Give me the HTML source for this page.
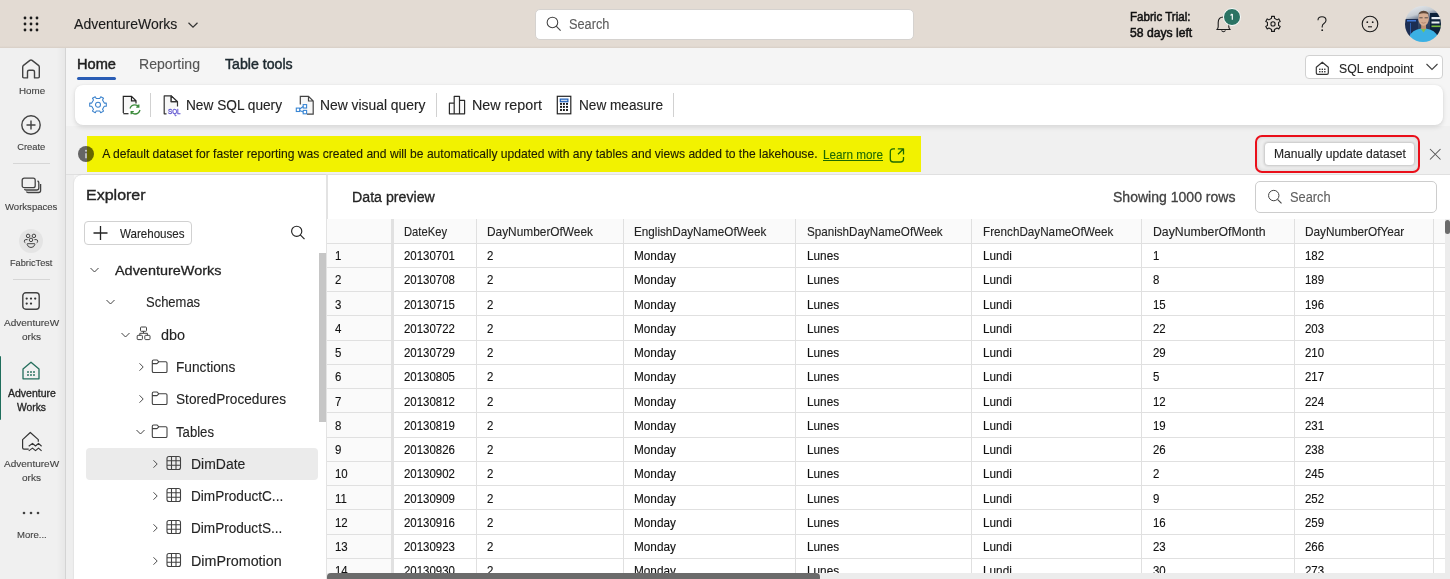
<!DOCTYPE html>
<html><head><meta charset="utf-8">
<style>
*{box-sizing:border-box;margin:0;padding:0}
html,body{width:1450px;height:579px;overflow:hidden;background:#f5f5f5;font-family:"Liberation Sans",sans-serif;color:#242424}
.a{position:absolute}
.t{position:absolute;line-height:1;white-space:nowrap;-webkit-text-stroke:0.12px currentColor}
svg{position:absolute;overflow:visible;fill:none}
.rl{position:absolute;left:0;width:62px;text-align:center;font-size:10px;line-height:1;color:#424242;white-space:nowrap}
.tc{position:absolute;line-height:1;white-space:nowrap;font-size:11.7px;color:#242424}
</style></head><body>
<div class="a" style="left:0px;top:0px;width:1450px;height:48px;background:#e3dbd3"></div>
<svg style="left:0;top:0" width="60" height="48"><circle cx="25" cy="18" r="1.4" fill="#1b1b1b"/><circle cx="25" cy="24" r="1.4" fill="#1b1b1b"/><circle cx="25" cy="30" r="1.4" fill="#1b1b1b"/><circle cx="31" cy="18" r="1.4" fill="#1b1b1b"/><circle cx="31" cy="24" r="1.4" fill="#1b1b1b"/><circle cx="31" cy="30" r="1.4" fill="#1b1b1b"/><circle cx="37" cy="18" r="1.4" fill="#1b1b1b"/><circle cx="37" cy="24" r="1.4" fill="#1b1b1b"/><circle cx="37" cy="30" r="1.4" fill="#1b1b1b"/></svg>
<div class="t" style="left:74.10px;top:17px;font-size:14px;color:#1b1b1b;">AdventureWorks</div>
<svg style="left:186px;top:20px" width="14" height="10"><path d="M2.5 2.8 L7 7.2 L11.5 2.8" stroke="#333" stroke-width="1.2"/></svg>
<div class="a" style="left:534.5px;top:8.5px;width:379.0px;height:31.0px;background:#fff;border-radius:5px;border:1px solid #d5d2cf"></div>
<svg style="left:546px;top:17px" width="16" height="16"><circle cx="6.45" cy="5.45" r="5.3" stroke="#424242" stroke-width="1.05"/><path d="M10.2 9.2 L14.6 13.6" stroke="#424242" stroke-width="1.1"/></svg>
<div class="t" style="left:568.90px;top:18px;font-size:13.8px;color:#5c5c5c;transform:scaleX(0.9241);transform-origin:0 0;">Search</div>
<div class="t" style="left:1129.70px;top:11px;font-size:12.3px;color:#111;-webkit-text-stroke:0.5px currentColor;transform:scaleX(0.9419);transform-origin:0 0;">Fabric Trial:</div>
<div class="t" style="left:1129.70px;top:27px;font-size:12.3px;color:#111;-webkit-text-stroke:0.5px currentColor;transform:scaleX(0.9890);transform-origin:0 0;">58 days left</div>
<svg style="left:1214px;top:14px" width="20" height="20"><path d="M3 15.5 L3.8 14.2 Q4.2 13.5 4.2 12.2 L4.2 8.5 Q4.2 3 9.5 3 Q14.8 3 14.8 8.5 L14.8 12.2 Q14.8 13.5 15.2 14.2 L16 15.5 Z" stroke="#1b1b1b" stroke-width="1.1"/><path d="M7.5 16.5 Q9.5 19 11.5 16.5" stroke="#1b1b1b" stroke-width="1.1"/></svg>
<div class="a" style="left:1223px;top:7.8px;width:18px;height:18px;border-radius:50%;background:#2b7363;border:1.5px solid #fff"></div>
<svg style="left:1226px;top:11px" width="12" height="12"><path d="M6.3 2.9 L6.3 8.7 M6.3 2.9 Q5.6 3.9 4.4 4.3" stroke="#fff" stroke-width="1.15"/></svg>
<svg style="left:1263px;top:14px" width="20" height="20"><path d="M15.54 11.43 L17.22 12.39 L15.77 14.91 L14.09 13.94 L11.45 15.46 L11.45 17.40 L8.55 17.40 L8.55 15.46 L5.91 13.94 L4.23 14.91 L2.78 12.39 L4.46 11.43 L4.46 8.37 L2.78 7.41 L4.23 4.89 L5.91 5.86 L8.55 4.34 L8.55 2.40 L11.45 2.40 L11.45 4.34 L14.09 5.86 L15.77 4.89 L17.22 7.41 L15.54 8.37Z" stroke="#1b1b1b" stroke-width="1.1" stroke-linejoin="round"/><circle cx="10" cy="9.9" r="2.1" stroke="#1b1b1b" stroke-width="1.1"/></svg>
<svg style="left:1314px;top:14px" width="16" height="20"><path d="M4 6.2 Q4 2.8 8 2.8 Q12 2.8 12 6.3 Q12 8.3 10 9.5 Q8.2 10.6 8.2 12.5 L8.2 13.5" stroke="#1b1b1b" stroke-width="1.1"/><circle cx="8.2" cy="16.2" r="0.9" fill="#1b1b1b"/></svg>
<svg style="left:1360px;top:14px" width="20" height="20"><circle cx="10" cy="10" r="7.8" stroke="#1b1b1b" stroke-width="1.1"/><circle cx="7.3" cy="8.2" r="0.9" fill="#1b1b1b"/><circle cx="12.7" cy="8.2" r="0.9" fill="#1b1b1b"/><path d="M8 12.8 L12 12.8" stroke="#1b1b1b" stroke-width="1.1"/></svg>
<svg style="left:1405px;top:6px" width="36" height="36"><defs><clipPath id="av"><circle cx="18" cy="18" r="18"/></clipPath>
<linearGradient id="avbg" x1="0" y1="0" x2="0.3" y2="1"><stop offset="0" stop-color="#eef0f2"/><stop offset="0.3" stop-color="#c5ccd3"/><stop offset="0.5" stop-color="#3a4c6a"/><stop offset="1" stop-color="#1e2c48"/></linearGradient>
<filter id="avb"><feGaussianBlur stdDeviation="0.35"/></filter></defs><g clip-path="url(#av)" filter="url(#avb)">
<rect width="36" height="36" fill="url(#avbg)"/>
<rect x="0" y="13" width="13" height="20" fill="#1d2e52"/><rect x="2" y="14" width="9" height="1.5" fill="#3f78d8"/><rect x="5" y="17" width="1" height="12" fill="#2f5fb0"/>
<rect x="25" y="7" width="11" height="22" fill="#10233a"/>
<rect x="26.5" y="11" width="9" height="2.2" fill="#e8eef4"/><rect x="26.5" y="15.5" width="8" height="2" fill="#e8eef4"/><rect x="26.5" y="19.5" width="9" height="1.6" fill="#79bd3a"/>
<path d="M3 36 Q4 26 12 23.5 L18.5 22 L25 23.5 Q33 26 34 36 Z" fill="#3bb0e4"/>
<path d="M15.5 22.5 L18.5 26.5 L21.5 22.5 Z" fill="#7cc05a"/>
<rect x="16.2" y="17" width="4.8" height="6" fill="#c09070"/>
<ellipse cx="18.6" cy="12.8" rx="5.3" ry="7" fill="#d6ad92"/>
<path d="M13.1 11 Q12.8 5 18.6 4.8 Q24.4 5 24.1 11 L23.6 8.3 Q18.6 6 13.6 8.3 Z" fill="#5e4a3a"/>
<path d="M14.3 11.8 L17.6 11.8 M19.6 11.8 L22.9 11.8" stroke="#333" stroke-width="0.8"/>
<path d="M16.5 16.5 Q18.6 17.8 20.7 16.5" stroke="#a0705a" stroke-width="0.6"/>
</g></svg>
<div class="a" style="left:0px;top:48px;width:66px;height:531px;background:#f0f0f0"></div>
<div class="a" style="left:56px;top:48px;width:10px;height:531px;background:linear-gradient(90deg,rgba(0,0,0,0),rgba(0,0,0,0.04))"></div>
<div class="a" style="left:65px;top:48px;width:1px;height:531px;background:rgba(0,0,0,.08)"></div>
<svg style="left:21px;top:59px" width="20" height="20"><path d="M1.7 17.8 L1.7 7.9 Q1.7 7 2.5 6.4 L8.9 1.4 Q10 0.6 11.1 1.4 L17.5 6.4 Q18.3 7 18.3 7.9 L18.3 17.8 Q18.3 18.9 17.2 18.9 L13.5 18.9 L13.5 12.8 Q13.5 11.2 11.9 11.2 L8.1 11.2 Q6.5 11.2 6.5 12.8 L6.5 18.9 L2.8 18.9 Q1.7 18.9 1.7 17.8 Z" stroke="#424242" stroke-width="1.4" stroke-linejoin="round"/></svg>
<div class="t" style="left:18.50px;top:86px;font-size:9.4px;color:#424242;transform:scaleX(1.0473);transform-origin:0 0;">Home</div>
<svg style="left:21px;top:115px" width="20" height="20"><circle cx="10" cy="10" r="9.2" stroke="#424242" stroke-width="1.4"/><path d="M10 5.5 L10 14.5 M5.5 10 L14.5 10" stroke="#424242" stroke-width="1.4"/></svg>
<div class="t" style="left:17.20px;top:142px;font-size:9.4px;color:#424242;">Create</div>
<div class="a" style="left:13px;top:163px;width:37px;height:1px;background:#d6d6d6"></div>
<svg style="left:21px;top:177px" width="21" height="18"><rect x="1.2" y="1.2" width="13" height="9.5" rx="2" stroke="#424242" stroke-width="1.3"/><path d="M16.5 4 Q17.8 4.3 17.8 5.8 L17.8 11 Q17.8 13 15.8 13 L5 13 Q3.8 13 3.5 12" stroke="#424242" stroke-width="1.3"/><path d="M19.6 7 L19.6 13.5 Q19.6 15.5 17.6 15.5 L7 15.5 Q5.8 15.5 5.5 14.5" stroke="#424242" stroke-width="1.3"/></svg>
<div class="t" style="left:5.10px;top:202px;font-size:9.4px;color:#424242;transform:scaleX(1.0190);transform-origin:0 0;">Workspaces</div>
<div class="a" style="left:19px;top:229px;width:24px;height:24px;border-radius:50%;background:#e4e4e4"></div>
<svg style="left:19px;top:229px" width="24" height="24"><g stroke="#3a3a3a" stroke-width="0.95"><circle cx="9.1" cy="6.9" r="1.75"/><circle cx="14.9" cy="6.9" r="1.75"/><circle cx="12" cy="10.9" r="1.75"/><path d="M8.6 10.6 L6.8 10.6 Q5.4 10.6 5.4 12 L5.4 12.6 Q5.4 13.5 6.3 13.8 M15.4 10.6 L17.2 10.6 Q18.6 10.6 18.6 12 L18.6 12.6 Q18.6 13.5 17.7 13.8 M8.3 14.7 L15.7 14.7 Q16 14.7 15.8 15.6 Q15 18.5 12 18.5 Q9 18.5 8.2 15.6 Q8 14.7 8.3 14.7 Z"/></g></svg>
<div class="t" style="left:10.20px;top:258px;font-size:9.4px;color:#424242;transform:scaleX(0.9803);transform-origin:0 0;">FabricTest</div>
<div class="a" style="left:13px;top:279px;width:37px;height:1px;background:#d6d6d6"></div>
<svg style="left:22px;top:292px" width="18" height="18"><rect x="0.8" y="0.8" width="16.4" height="16.4" rx="3" stroke="#424242" stroke-width="1.4"/><circle cx="4.7" cy="6.6" r="1.15" fill="#333"/><circle cx="9" cy="6.6" r="1.15" fill="#333"/><circle cx="13.2" cy="6.6" r="1.15" fill="#333"/><circle cx="4.7" cy="11.6" r="1.15" fill="#333"/><circle cx="9" cy="11.6" r="1.15" fill="#333"/></svg>
<div class="t" style="left:3.60px;top:318px;font-size:9.4px;color:#424242;transform:scaleX(1.0680);transform-origin:0 0;">AdventureW</div>
<div class="t" style="left:21.80px;top:332px;font-size:9.4px;color:#424242;transform:scaleX(1.0723);transform-origin:0 0;">orks</div>
<div class="a" style="left:0px;top:355.5px;width:1.3px;height:64.5px;background:#1f6e5c;border-radius:0 1px 1px 0"></div>
<svg style="left:22px;top:361px" width="18" height="19"><path d="M1 8 L9 1.2 L17 8 L17 17.8 L1 17.8 Z" stroke="#246e5c" stroke-width="1.3" stroke-linejoin="round"/><circle cx="6" cy="11" r="0.95" fill="#246e5c"/><circle cx="6" cy="14" r="0.95" fill="#246e5c"/><circle cx="9" cy="11" r="0.95" fill="#246e5c"/><circle cx="9" cy="14" r="0.95" fill="#246e5c"/><circle cx="12" cy="11" r="0.95" fill="#246e5c"/><circle cx="12" cy="14" r="0.95" fill="#246e5c"/></svg>
<div class="t" style="left:7.50px;top:389px;font-size:10px;color:#242424;-webkit-text-stroke:0.3px currentColor;transform:scaleX(1.0484);transform-origin:0 0;">Adventure</div>
<div class="t" style="left:16.90px;top:403px;font-size:10px;color:#242424;-webkit-text-stroke:0.3px currentColor;transform:scaleX(1.0300);transform-origin:0 0;">Works</div>
<svg style="left:21px;top:431px" width="22" height="22"><path d="M7.7 18.2 L3 18.2 Q1.6 18.2 1.6 16.8 L1.6 8.6 L9.3 1.5 L17.3 8.6 L17.3 10.7" stroke="#333" stroke-width="1.2" stroke-linejoin="round"/><path d="M7.7 15.3 L11.5 12.4 L14.5 15 L17.5 12.4 L20.6 15.2 M7.7 19.9 L11.5 17.1 L14.5 19.6 L17.5 17.1 L20.6 19.9" stroke="#333" stroke-width="1.15" stroke-linejoin="round"/></svg>
<div class="t" style="left:3.60px;top:459px;font-size:9.4px;color:#424242;transform:scaleX(1.0680);transform-origin:0 0;">AdventureW</div>
<div class="t" style="left:21.80px;top:473px;font-size:9.4px;color:#424242;transform:scaleX(1.0723);transform-origin:0 0;">orks</div>
<svg style="left:20px;top:508px" width="22" height="10"><circle cx="4" cy="5" r="1.3" fill="#424242"/><circle cx="11" cy="5" r="1.3" fill="#424242"/><circle cx="18" cy="5" r="1.3" fill="#424242"/></svg>
<div class="t" style="left:16.70px;top:530px;font-size:9.4px;color:#424242;transform:scaleX(1.0176);transform-origin:0 0;">More...</div>
<div class="a" style="left:0px;top:46px;width:1450px;height:2px;background:linear-gradient(180deg,rgba(0,0,0,0),rgba(60,40,20,.07))"></div>
<div class="t" style="left:77.00px;top:58px;font-size:13.8px;color:#1f1f1f;-webkit-text-stroke:0.45px currentColor;transform:scaleX(1.0594);transform-origin:0 0;">Home</div>
<div class="a" style="left:77px;top:77px;width:39px;height:2.5px;background:#2a5db5;border-radius:2px"></div>
<div class="t" style="left:139.40px;top:58px;font-size:13.8px;color:#555;transform:scaleX(1.0196);transform-origin:0 0;">Reporting</div>
<div class="t" style="left:224.60px;top:58px;font-size:13.8px;color:#1e2a30;-webkit-text-stroke:0.45px currentColor;transform:scaleX(1.0262);transform-origin:0 0;">Table tools</div>
<div class="a" style="left:1305px;top:55px;width:138px;height:24px;background:#fff;border:1px solid #d1d1d1;border-radius:4px"></div>
<svg style="left:1315px;top:61px" width="15" height="15"><path d="M1.3 6.3 L7.3 1.2 L13.3 6.3 L13.3 11.9 Q13.3 13.3 11.9 13.3 L2.7 13.3 Q1.3 13.3 1.3 11.9 Z" stroke="#333" stroke-width="1.15" stroke-linejoin="round"/><rect x="4.10" y="7.60" width="1.4" height="1.4" fill="#333"/><rect x="4.10" y="10.00" width="1.4" height="1.4" fill="#333"/><rect x="6.60" y="7.60" width="1.4" height="1.4" fill="#333"/><rect x="6.60" y="10.00" width="1.4" height="1.4" fill="#333"/><rect x="9.10" y="7.60" width="1.4" height="1.4" fill="#333"/><rect x="9.10" y="10.00" width="1.4" height="1.4" fill="#333"/></svg>
<div class="t" style="left:1339.00px;top:63px;font-size:12.7px;color:#242424;transform:scaleX(0.9660);transform-origin:0 0;">SQL endpoint</div>
<svg style="left:1425px;top:62px" width="14" height="10"><path d="M1.5 2 L7 7.5 L12.5 2" stroke="#424242" stroke-width="1.1"/></svg>
<div class="a" style="left:66px;top:126px;width:1384px;height:48px;background:#f0f0f0"></div>
<div class="a" style="left:74.5px;top:85px;width:1368.0px;height:39.5px;background:#fff;border-radius:8px;box-shadow:0 2px 5px rgba(0,0,0,.12),0 0 2px rgba(0,0,0,.06)"></div>
<svg style="left:88px;top:95px" width="20" height="20"><path d="M16.28 8.10 L18.30 8.10 L18.30 11.30 L16.28 11.30 L14.52 14.34 L15.54 16.09 L12.76 17.69 L11.75 15.94 L8.25 15.94 L7.24 17.69 L4.46 16.09 L5.48 14.34 L3.72 11.30 L1.70 11.30 L1.70 8.10 L3.72 8.10 L5.48 5.06 L4.46 3.31 L7.24 1.71 L8.25 3.46 L11.75 3.46 L12.76 1.71 L15.54 3.31 L14.52 5.06Z" stroke="#3b82cc" stroke-width="1.05" stroke-linejoin="round"/><circle cx="10" cy="9.7" r="2.5" stroke="#3b82cc" stroke-width="1.05"/></svg>
<svg style="left:122px;top:95px" width="20" height="22"><path d="M1.3 18 L1.3 1.3 L9.5 1.3 L14 5.8 L14 8.5 M9.5 1.3 L9.5 5.8 L14 5.8" stroke="#242424" stroke-width="1.2" fill="#f7f7f7"/><path d="M6.5 18.7 L1.3 18.7" stroke="#242424" stroke-width="1.2"/><path d="M8 13.5 Q9.2 9.8 13 9.8 Q15.5 9.8 16.8 11.8 M16.8 9.5 L16.8 12.2 L14.2 12.2 M18 15 Q16.8 19 13 19 Q10.5 19 9.2 17 M9.2 19.3 L9.2 16.6 L11.8 16.6" stroke="#3a8a3a" stroke-width="1.3" fill="none"/></svg>
<div class="a" style="left:150px;top:93px;width:1px;height:24px;background:#d1d1d1"></div>
<svg style="left:163px;top:95px" width="20" height="21"><path d="M3.5 18.8 L1.2 18.8 L1.2 0.9 L8.2 0.9 L14.5 7 L14.5 11.6 M8.2 0.9 L8.2 6.7 L14.5 6.7" stroke="#333" stroke-width="1.2" fill="#f7f7f7" stroke-linejoin="round"/><path d="M8.2 0.9 L8.2 6.7 L14.5 6.7 Z" fill="#fff" stroke="#333" stroke-width="1.2" stroke-linejoin="round"/><text x="5.1" y="18.8" font-family="Liberation Sans" font-size="7.8" textLength="12.5" lengthAdjust="spacingAndGlyphs" fill="#5f55d0" stroke="#5f55d0" stroke-width="0.35">SQL</text></svg>
<div class="t" style="left:186.40px;top:99px;font-size:13.8px;transform:scaleX(0.9910);transform-origin:0 0;">New SQL query</div>
<svg style="left:295px;top:95px" width="21" height="21"><path d="M5.3 9.5 L5.3 1.3 L13.5 1.3 L18.2 6 L18.2 19.2 L12 19.2 M13.5 1.3 L13.5 6 L18.2 6" stroke="#444" stroke-width="1.2" fill="#f7f7f7"/><rect x="1.3" y="13.1" width="3.4" height="3.4" stroke="#3a86d4" stroke-width="1.1" fill="#fff"/><rect x="8.2" y="9.6" width="3.4" height="3.4" stroke="#3a86d4" stroke-width="1.1" fill="#fff"/><rect x="8.2" y="15.4" width="3.4" height="3.4" stroke="#3a86d4" stroke-width="1.1" fill="#fff"/><path d="M4.7 14 L8.2 11.5 M4.7 15.6 L8.2 17" stroke="#3a86d4" stroke-width="1.1"/></svg>
<div class="t" style="left:319.70px;top:99px;font-size:13.8px;transform:scaleX(1.0042);transform-origin:0 0;">New visual query</div>
<div class="a" style="left:436px;top:93px;width:1px;height:24px;background:#d1d1d1"></div>
<svg style="left:448px;top:95px" width="18" height="20"><path d="M1.4 18.8 L1.4 8.2 L6.2 8.2 L6.2 18.8 Z M6.2 18.8 L6.2 1.3 L11.5 1.3 L11.5 18.8 Z M11.5 18.8 L11.5 5.4 L16.6 5.4 L16.6 18.8 Z" stroke="#2a2a2a" stroke-width="1.2" fill="#fafafa" stroke-linejoin="round"/></svg>
<div class="t" style="left:471.60px;top:99px;font-size:13.8px;transform:scaleX(1.0373);transform-origin:0 0;">New report</div>
<svg style="left:556px;top:95px" width="16" height="20"><rect x="1.3" y="1.3" width="13.5" height="17.5" stroke="#242424" stroke-width="1.2"/><rect x="4.3" y="4.1" width="7.6" height="2.6" stroke="#1f5fb8" stroke-width="1.2" fill="#c9d9ef"/><rect x="4.05" y="7.95" width="1.9" height="1.9" fill="#111"/><rect x="4.05" y="10.95" width="1.9" height="1.9" fill="#111"/><rect x="4.05" y="14.05" width="1.9" height="1.9" fill="#111"/><rect x="6.95" y="7.95" width="1.9" height="1.9" fill="#111"/><rect x="6.95" y="10.95" width="1.9" height="1.9" fill="#111"/><rect x="6.95" y="14.05" width="1.9" height="1.9" fill="#111"/><rect x="10.05" y="7.95" width="1.9" height="1.9" fill="#111"/><rect x="10.05" y="10.95" width="1.9" height="1.9" fill="#111"/><rect x="10.05" y="14.05" width="1.9" height="1.9" fill="#111"/></svg>
<div class="t" style="left:578.80px;top:99px;font-size:13.8px;transform:scaleX(0.9868);transform-origin:0 0;">New measure</div>
<div class="a" style="left:673px;top:93px;width:1px;height:24px;background:#d1d1d1"></div>
<div class="a" style="left:66px;top:174px;width:1384px;height:1px;background:#e0e0e0"></div>
<div class="a" style="left:66px;top:175px;width:8px;height:404px;background:#eeeeee"></div>
<div class="a" style="left:87px;top:136px;width:834px;height:36px;background:#f2f200"></div>
<div class="a" style="left:78px;top:145.5px;width:16px;height:16px;border-radius:50%;background:#6b6b6b;mix-blend-mode:multiply"></div>
<svg style="left:78px;top:145.5px" width="16" height="16"><path d="M8 7.2 L8 12.2" stroke="#cfcfcf" stroke-width="1.6"/><circle cx="8" cy="4.8" r="1" fill="#cfcfcf"/></svg>
<div class="t" style="left:102.20px;top:148px;font-size:12.1px;color:#1c1c00;">A default dataset for faster reporting was created and will be automatically updated with any tables and views added to the lakehouse.</div>
<div class="t" style="left:822.80px;top:149px;font-size:12.1px;color:#1d6a00;transform:scaleX(0.9699);transform-origin:0 0;"><span style="text-decoration:underline">Learn more</span></div>
<svg style="left:889px;top:147px" width="17" height="17"><path d="M6 1.8 L4.2 1.8 Q1.3 1.8 1.3 4.7 L1.3 12.2 Q1.3 15 4.2 15 L11.6 15 Q14.5 15 14.5 12.2 L14.5 10 M8.8 1.8 L14.5 1.8 L14.5 7.5 M14.5 1.8 L9 7.3" stroke="#1d6a00" stroke-width="1.3" stroke-linejoin="round"/></svg>
<div class="a" style="left:1254.5px;top:135px;width:165.0px;height:38px;border:2.2px solid #ea0f1a;border-radius:7px;box-shadow:inset 0 0 5px rgba(0,0,0,.14)"></div>
<div class="a" style="left:1264px;top:141.5px;width:150.5px;height:24.0px;background:#fff;border:1px solid #d1d1d1;border-radius:4px;box-shadow:0 0 3px rgba(0,0,0,.18)"></div>
<div class="t" style="left:1274.00px;top:148px;font-size:12.1px;">Manually update dataset</div>
<svg style="left:1428px;top:147px" width="14" height="14"><path d="M2 2 L12.5 12.5 M12.5 2 L2 12.5" stroke="#555" stroke-width="1.05"/></svg>
<div class="a" style="left:74px;top:175px;width:252px;height:404px;background:#fff;border-top-left-radius:8px;box-shadow:0 0 1.5px rgba(0,0,0,.2)"></div>
<div class="a" style="left:326px;top:175px;width:2px;height:404px;background:#e3e3e3"></div>
<div class="t" style="left:86.20px;top:187px;font-size:15.2px;color:#242424;-webkit-text-stroke:0.35px #242424;transform:scaleX(1.0537);transform-origin:0 0;">Explorer</div>
<div class="a" style="left:84px;top:221px;width:108px;height:24px;background:#fff;border:1px solid #d1d1d1;border-radius:4px"></div>
<svg style="left:92px;top:225px" width="17" height="16"><path d="M8.5 1 L8.5 15 M1.5 8 L15.5 8" stroke="#242424" stroke-width="1.3"/></svg>
<div class="t" style="left:120.20px;top:228px;font-size:12.1px;transform:scaleX(0.9577);transform-origin:0 0;">Warehouses</div>
<svg style="left:289px;top:225px" width="18" height="17"><circle cx="7.7" cy="6.3" r="5.1" stroke="#242424" stroke-width="1.15"/><path d="M11.3 9.9 L15.5 14.1" stroke="#242424" stroke-width="1.2"/></svg>
<div class="a" style="left:319px;top:253px;width:7px;height:169px;background:#c6c6c6"></div>
<svg style="left:89px;top:265px" width="10" height="10"><path d="M1.5 3 L5.5 7 L9.5 3" stroke="#424242" stroke-width="1"/></svg>
<div class="t" style="left:114.70px;top:264px;font-size:13.7px;color:#242424;-webkit-text-stroke:0.3px currentColor;transform:scaleX(1.0541);transform-origin:0 0;">AdventureWorks</div>
<svg style="left:104.5px;top:297px" width="10" height="10"><path d="M1.5 3 L5.5 7 L9.5 3" stroke="#424242" stroke-width="1"/></svg>
<div class="t" style="left:146.10px;top:295px;font-size:14px;color:#242424;transform:scaleX(0.9270);transform-origin:0 0;">Schemas</div>
<svg style="left:120px;top:330px" width="10" height="10"><path d="M1.5 3 L5.5 7 L9.5 3" stroke="#424242" stroke-width="1"/></svg>
<svg style="left:136px;top:326px" width="16" height="15"><rect x="4.5" y="1" width="6" height="4.3" rx="0.8" stroke="#424242" stroke-width="1"/><rect x="1.2" y="9.3" width="5.2" height="4.3" rx="0.8" stroke="#424242" stroke-width="1"/><rect x="8.8" y="9.3" width="5.2" height="4.3" rx="0.8" stroke="#424242" stroke-width="1"/><path d="M7.5 5.3 L7.5 7.3 L3.8 7.3 L3.8 9.3 M7.5 7.3 L11.4 7.3 L11.4 9.3" stroke="#424242" stroke-width="1"/></svg>
<div class="t" style="left:161.30px;top:328px;font-size:14px;color:#242424;transform:scaleX(1.0317);transform-origin:0 0;">dbo</div>
<svg style="left:136.5px;top:362px" width="8" height="10"><path d="M2.5 1.3 L6.2 5 L2.5 8.7" stroke="#424242" stroke-width="0.95"/></svg>
<svg style="left:151px;top:358px" width="18" height="16"><path d="M1.3 3.3 Q1.3 2 2.6 2 L6.2 2 L7.8 3.8 L14.7 3.8 Q16 3.8 16 5.1 L16 13.2 Q16 14.5 14.7 14.5 L2.6 14.5 Q1.3 14.5 1.3 13.2 Z M1.3 5.6 L6 5.6 L7.8 3.8" stroke="#424242" stroke-width="1.1" stroke-linejoin="round"/></svg>
<div class="t" style="left:176.10px;top:360px;font-size:14px;transform:scaleX(0.9769);transform-origin:0 0;">Functions</div>
<svg style="left:136.5px;top:394px" width="8" height="10"><path d="M2.5 1.3 L6.2 5 L2.5 8.7" stroke="#424242" stroke-width="0.95"/></svg>
<svg style="left:151px;top:390px" width="18" height="16"><path d="M1.3 3.3 Q1.3 2 2.6 2 L6.2 2 L7.8 3.8 L14.7 3.8 Q16 3.8 16 5.1 L16 13.2 Q16 14.5 14.7 14.5 L2.6 14.5 Q1.3 14.5 1.3 13.2 Z M1.3 5.6 L6 5.6 L7.8 3.8" stroke="#424242" stroke-width="1.1" stroke-linejoin="round"/></svg>
<div class="t" style="left:176.10px;top:392px;font-size:14px;transform:scaleX(0.9748);transform-origin:0 0;">StoredProcedures</div>
<svg style="left:135px;top:427px" width="10" height="10"><path d="M1.5 3 L5.5 7 L9.5 3" stroke="#424242" stroke-width="1"/></svg>
<svg style="left:151px;top:423px" width="18" height="16"><path d="M1.3 3.3 Q1.3 2 2.6 2 L6.2 2 L7.8 3.8 L14.7 3.8 Q16 3.8 16 5.1 L16 13.2 Q16 14.5 14.7 14.5 L2.6 14.5 Q1.3 14.5 1.3 13.2 Z M1.3 5.6 L6 5.6 L7.8 3.8" stroke="#424242" stroke-width="1.1" stroke-linejoin="round"/></svg>
<div class="t" style="left:176.00px;top:425px;font-size:14px;transform:scaleX(0.9390);transform-origin:0 0;">Tables</div>
<div class="a" style="left:86px;top:448px;width:232px;height:31.5px;background:#ebebeb;border-radius:4px"></div>
<svg style="left:150.5px;top:459px" width="8" height="10"><path d="M2.5 1.3 L6.2 5 L2.5 8.7" stroke="#424242" stroke-width="0.95"/></svg>
<svg style="left:166px;top:454.5px" width="16" height="16"><rect x="1" y="1.5" width="13.5" height="13" rx="2" stroke="#424242" stroke-width="1.1"/><path d="M5.5 1.5 L5.5 14.5 M10 1.5 L10 14.5 M1 5.8 L14.5 5.8 M1 10.2 L14.5 10.2" stroke="#424242" stroke-width="1.1"/></svg>
<div class="t" style="left:191.30px;top:457px;font-size:14px;transform:scaleX(0.9969);transform-origin:0 0;">DimDate</div>
<svg style="left:150.5px;top:491px" width="8" height="10"><path d="M2.5 1.3 L6.2 5 L2.5 8.7" stroke="#424242" stroke-width="0.95"/></svg>
<svg style="left:166px;top:486.5px" width="16" height="16"><rect x="1" y="1.5" width="13.5" height="13" rx="2" stroke="#424242" stroke-width="1.1"/><path d="M5.5 1.5 L5.5 14.5 M10 1.5 L10 14.5 M1 5.8 L14.5 5.8 M1 10.2 L14.5 10.2" stroke="#424242" stroke-width="1.1"/></svg>
<div class="t" style="left:191.30px;top:489px;font-size:14px;transform:scaleX(0.9713);transform-origin:0 0;">DimProductC...</div>
<svg style="left:150.5px;top:523px" width="8" height="10"><path d="M2.5 1.3 L6.2 5 L2.5 8.7" stroke="#424242" stroke-width="0.95"/></svg>
<svg style="left:166px;top:518.5px" width="16" height="16"><rect x="1" y="1.5" width="13.5" height="13" rx="2" stroke="#424242" stroke-width="1.1"/><path d="M5.5 1.5 L5.5 14.5 M10 1.5 L10 14.5 M1 5.8 L14.5 5.8 M1 10.2 L14.5 10.2" stroke="#424242" stroke-width="1.1"/></svg>
<div class="t" style="left:191.30px;top:521px;font-size:14px;transform:scaleX(0.9698);transform-origin:0 0;">DimProductS...</div>
<svg style="left:150.5px;top:556px" width="8" height="10"><path d="M2.5 1.3 L6.2 5 L2.5 8.7" stroke="#424242" stroke-width="0.95"/></svg>
<svg style="left:166px;top:551.5px" width="16" height="16"><rect x="1" y="1.5" width="13.5" height="13" rx="2" stroke="#424242" stroke-width="1.1"/><path d="M5.5 1.5 L5.5 14.5 M10 1.5 L10 14.5 M1 5.8 L14.5 5.8 M1 10.2 L14.5 10.2" stroke="#424242" stroke-width="1.1"/></svg>
<div class="t" style="left:191.30px;top:554px;font-size:14px;transform:scaleX(1.0225);transform-origin:0 0;">DimPromotion</div>
<div class="a" style="left:328px;top:175px;width:1122px;height:404px;background:#fff"></div>
<div class="t" style="left:352.20px;top:191px;font-size:13.8px;color:#242424;-webkit-text-stroke:0.3px currentColor;transform:scaleX(1.0282);transform-origin:0 0;">Data preview</div>
<div class="t" style="left:1112.50px;top:191px;font-size:13.8px;color:#424242;-webkit-text-stroke:0.3px currentColor;transform:scaleX(1.0173);transform-origin:0 0;">Showing 1000 rows</div>
<div class="a" style="left:1255px;top:181px;width:182px;height:32px;background:#fff;border:1px solid #cdcdcd;border-radius:5px"></div>
<svg style="left:1267px;top:190px" width="16" height="16"><circle cx="6.75" cy="5.55" r="5.2" stroke="#424242" stroke-width="1.0"/><path d="M10.5 9.3 L14.5 13.4" stroke="#424242" stroke-width="1.05"/></svg>
<div class="t" style="left:1289.60px;top:191px;font-size:13.8px;color:#616161;transform:scaleX(0.9287);transform-origin:0 0;">Search</div>
<div class="a" style="left:327px;top:219px;width:1118px;height:24px;background:#fafafa"></div>
<div class="a" style="left:327px;top:243px;width:64px;height:330px;background:#fafafa"></div>
<div class="a" style="left:391px;top:219px;width:3px;height:354px;background:#e1e1e1"></div>
<div class="a" style="left:476px;top:219px;width:1px;height:354px;background:#e0e0e0"></div>
<div class="a" style="left:623px;top:219px;width:1px;height:354px;background:#e0e0e0"></div>
<div class="a" style="left:795px;top:219px;width:1px;height:354px;background:#e0e0e0"></div>
<div class="a" style="left:971px;top:219px;width:1px;height:354px;background:#e0e0e0"></div>
<div class="a" style="left:1141px;top:219px;width:1px;height:354px;background:#e0e0e0"></div>
<div class="a" style="left:1294px;top:219px;width:1px;height:354px;background:#e0e0e0"></div>
<div class="a" style="left:1433px;top:219px;width:1px;height:354px;background:#e0e0e0"></div>
<div class="a" style="left:327px;top:243px;width:1118px;height:1px;background:#e0e0e0"></div>
<div class="a" style="left:327px;top:267px;width:1118px;height:1px;background:#e0e0e0"></div>
<div class="a" style="left:327px;top:291px;width:1118px;height:1px;background:#e0e0e0"></div>
<div class="a" style="left:327px;top:315px;width:1118px;height:1px;background:#e0e0e0"></div>
<div class="a" style="left:327px;top:340px;width:1118px;height:1px;background:#e0e0e0"></div>
<div class="a" style="left:327px;top:364px;width:1118px;height:1px;background:#e0e0e0"></div>
<div class="a" style="left:327px;top:388px;width:1118px;height:1px;background:#e0e0e0"></div>
<div class="a" style="left:327px;top:412px;width:1118px;height:1px;background:#e0e0e0"></div>
<div class="a" style="left:327px;top:437px;width:1118px;height:1px;background:#e0e0e0"></div>
<div class="a" style="left:327px;top:461px;width:1118px;height:1px;background:#e0e0e0"></div>
<div class="a" style="left:327px;top:485px;width:1118px;height:1px;background:#e0e0e0"></div>
<div class="a" style="left:327px;top:509px;width:1118px;height:1px;background:#e0e0e0"></div>
<div class="a" style="left:327px;top:534px;width:1118px;height:1px;background:#e0e0e0"></div>
<div class="a" style="left:327px;top:558px;width:1118px;height:1px;background:#e0e0e0"></div>
<div class="t" style="left:404.20px;top:226px;font-size:12.4px;color:#242424;transform:scaleX(0.9047);transform-origin:0 0;">DateKey</div>
<div class="t" style="left:487.30px;top:226px;font-size:12.4px;color:#242424;transform:scaleX(0.9581);transform-origin:0 0;">DayNumberOfWeek</div>
<div class="t" style="left:634.40px;top:226px;font-size:12.4px;color:#242424;transform:scaleX(0.9432);transform-origin:0 0;">EnglishDayNameOfWeek</div>
<div class="t" style="left:806.60px;top:226px;font-size:12.4px;color:#242424;transform:scaleX(0.9397);transform-origin:0 0;">SpanishDayNameOfWeek</div>
<div class="t" style="left:982.60px;top:226px;font-size:12.4px;color:#242424;transform:scaleX(0.9436);transform-origin:0 0;">FrenchDayNameOfWeek</div>
<div class="t" style="left:1152.60px;top:226px;font-size:12.4px;color:#242424;transform:scaleX(0.9910);transform-origin:0 0;">DayNumberOfMonth</div>
<div class="t" style="left:1305.40px;top:226px;font-size:12.4px;color:#242424;transform:scaleX(0.9528);transform-origin:0 0;">DayNumberOfYear</div>
<div class="a" style="left:327px;top:243px;width:1118px;height:330px;overflow:hidden">
<div class="t" style="left:8.30px;top:7px;font-size:12.4px;color:#111;transform:scaleX(0.9250);transform-origin:0 0;">1</div>
<div class="t" style="left:77.20px;top:7px;font-size:12.4px;color:#111;transform:scaleX(0.9250);transform-origin:0 0;">20130701</div>
<div class="t" style="left:160.30px;top:7px;font-size:12.4px;color:#111;transform:scaleX(0.9250);transform-origin:0 0;">2</div>
<div class="t" style="left:307.40px;top:7px;font-size:12.4px;color:#111;transform:scaleX(0.9500);transform-origin:0 0;">Monday</div>
<div class="t" style="left:479.60px;top:7px;font-size:12.4px;color:#111;transform:scaleX(0.9500);transform-origin:0 0;">Lunes</div>
<div class="t" style="left:655.60px;top:7px;font-size:12.4px;color:#111;transform:scaleX(0.9500);transform-origin:0 0;">Lundi</div>
<div class="t" style="left:825.60px;top:7px;font-size:12.4px;color:#111;transform:scaleX(0.9250);transform-origin:0 0;">1</div>
<div class="t" style="left:978.40px;top:7px;font-size:12.4px;color:#111;transform:scaleX(0.9250);transform-origin:0 0;">182</div>
<div class="t" style="left:8.30px;top:31px;font-size:12.4px;color:#111;transform:scaleX(0.9250);transform-origin:0 0;">2</div>
<div class="t" style="left:77.20px;top:31px;font-size:12.4px;color:#111;transform:scaleX(0.9250);transform-origin:0 0;">20130708</div>
<div class="t" style="left:160.30px;top:31px;font-size:12.4px;color:#111;transform:scaleX(0.9250);transform-origin:0 0;">2</div>
<div class="t" style="left:307.40px;top:31px;font-size:12.4px;color:#111;transform:scaleX(0.9500);transform-origin:0 0;">Monday</div>
<div class="t" style="left:479.60px;top:31px;font-size:12.4px;color:#111;transform:scaleX(0.9500);transform-origin:0 0;">Lunes</div>
<div class="t" style="left:655.60px;top:31px;font-size:12.4px;color:#111;transform:scaleX(0.9500);transform-origin:0 0;">Lundi</div>
<div class="t" style="left:825.60px;top:31px;font-size:12.4px;color:#111;transform:scaleX(0.9250);transform-origin:0 0;">8</div>
<div class="t" style="left:978.40px;top:31px;font-size:12.4px;color:#111;transform:scaleX(0.9250);transform-origin:0 0;">189</div>
<div class="t" style="left:8.30px;top:56px;font-size:12.4px;color:#111;transform:scaleX(0.9250);transform-origin:0 0;">3</div>
<div class="t" style="left:77.20px;top:56px;font-size:12.4px;color:#111;transform:scaleX(0.9250);transform-origin:0 0;">20130715</div>
<div class="t" style="left:160.30px;top:56px;font-size:12.4px;color:#111;transform:scaleX(0.9250);transform-origin:0 0;">2</div>
<div class="t" style="left:307.40px;top:56px;font-size:12.4px;color:#111;transform:scaleX(0.9500);transform-origin:0 0;">Monday</div>
<div class="t" style="left:479.60px;top:56px;font-size:12.4px;color:#111;transform:scaleX(0.9500);transform-origin:0 0;">Lunes</div>
<div class="t" style="left:655.60px;top:56px;font-size:12.4px;color:#111;transform:scaleX(0.9500);transform-origin:0 0;">Lundi</div>
<div class="t" style="left:825.60px;top:56px;font-size:12.4px;color:#111;transform:scaleX(0.9250);transform-origin:0 0;">15</div>
<div class="t" style="left:978.40px;top:56px;font-size:12.4px;color:#111;transform:scaleX(0.9250);transform-origin:0 0;">196</div>
<div class="t" style="left:8.30px;top:80px;font-size:12.4px;color:#111;transform:scaleX(0.9250);transform-origin:0 0;">4</div>
<div class="t" style="left:77.20px;top:80px;font-size:12.4px;color:#111;transform:scaleX(0.9250);transform-origin:0 0;">20130722</div>
<div class="t" style="left:160.30px;top:80px;font-size:12.4px;color:#111;transform:scaleX(0.9250);transform-origin:0 0;">2</div>
<div class="t" style="left:307.40px;top:80px;font-size:12.4px;color:#111;transform:scaleX(0.9500);transform-origin:0 0;">Monday</div>
<div class="t" style="left:479.60px;top:80px;font-size:12.4px;color:#111;transform:scaleX(0.9500);transform-origin:0 0;">Lunes</div>
<div class="t" style="left:655.60px;top:80px;font-size:12.4px;color:#111;transform:scaleX(0.9500);transform-origin:0 0;">Lundi</div>
<div class="t" style="left:825.60px;top:80px;font-size:12.4px;color:#111;transform:scaleX(0.9250);transform-origin:0 0;">22</div>
<div class="t" style="left:978.40px;top:80px;font-size:12.4px;color:#111;transform:scaleX(0.9250);transform-origin:0 0;">203</div>
<div class="t" style="left:8.30px;top:104px;font-size:12.4px;color:#111;transform:scaleX(0.9250);transform-origin:0 0;">5</div>
<div class="t" style="left:77.20px;top:104px;font-size:12.4px;color:#111;transform:scaleX(0.9250);transform-origin:0 0;">20130729</div>
<div class="t" style="left:160.30px;top:104px;font-size:12.4px;color:#111;transform:scaleX(0.9250);transform-origin:0 0;">2</div>
<div class="t" style="left:307.40px;top:104px;font-size:12.4px;color:#111;transform:scaleX(0.9500);transform-origin:0 0;">Monday</div>
<div class="t" style="left:479.60px;top:104px;font-size:12.4px;color:#111;transform:scaleX(0.9500);transform-origin:0 0;">Lunes</div>
<div class="t" style="left:655.60px;top:104px;font-size:12.4px;color:#111;transform:scaleX(0.9500);transform-origin:0 0;">Lundi</div>
<div class="t" style="left:825.60px;top:104px;font-size:12.4px;color:#111;transform:scaleX(0.9250);transform-origin:0 0;">29</div>
<div class="t" style="left:978.40px;top:104px;font-size:12.4px;color:#111;transform:scaleX(0.9250);transform-origin:0 0;">210</div>
<div class="t" style="left:8.30px;top:128px;font-size:12.4px;color:#111;transform:scaleX(0.9250);transform-origin:0 0;">6</div>
<div class="t" style="left:77.20px;top:128px;font-size:12.4px;color:#111;transform:scaleX(0.9250);transform-origin:0 0;">20130805</div>
<div class="t" style="left:160.30px;top:128px;font-size:12.4px;color:#111;transform:scaleX(0.9250);transform-origin:0 0;">2</div>
<div class="t" style="left:307.40px;top:128px;font-size:12.4px;color:#111;transform:scaleX(0.9500);transform-origin:0 0;">Monday</div>
<div class="t" style="left:479.60px;top:128px;font-size:12.4px;color:#111;transform:scaleX(0.9500);transform-origin:0 0;">Lunes</div>
<div class="t" style="left:655.60px;top:128px;font-size:12.4px;color:#111;transform:scaleX(0.9500);transform-origin:0 0;">Lundi</div>
<div class="t" style="left:825.60px;top:128px;font-size:12.4px;color:#111;transform:scaleX(0.9250);transform-origin:0 0;">5</div>
<div class="t" style="left:978.40px;top:128px;font-size:12.4px;color:#111;transform:scaleX(0.9250);transform-origin:0 0;">217</div>
<div class="t" style="left:8.30px;top:153px;font-size:12.4px;color:#111;transform:scaleX(0.9250);transform-origin:0 0;">7</div>
<div class="t" style="left:77.20px;top:153px;font-size:12.4px;color:#111;transform:scaleX(0.9250);transform-origin:0 0;">20130812</div>
<div class="t" style="left:160.30px;top:153px;font-size:12.4px;color:#111;transform:scaleX(0.9250);transform-origin:0 0;">2</div>
<div class="t" style="left:307.40px;top:153px;font-size:12.4px;color:#111;transform:scaleX(0.9500);transform-origin:0 0;">Monday</div>
<div class="t" style="left:479.60px;top:153px;font-size:12.4px;color:#111;transform:scaleX(0.9500);transform-origin:0 0;">Lunes</div>
<div class="t" style="left:655.60px;top:153px;font-size:12.4px;color:#111;transform:scaleX(0.9500);transform-origin:0 0;">Lundi</div>
<div class="t" style="left:825.60px;top:153px;font-size:12.4px;color:#111;transform:scaleX(0.9250);transform-origin:0 0;">12</div>
<div class="t" style="left:978.40px;top:153px;font-size:12.4px;color:#111;transform:scaleX(0.9250);transform-origin:0 0;">224</div>
<div class="t" style="left:8.30px;top:177px;font-size:12.4px;color:#111;transform:scaleX(0.9250);transform-origin:0 0;">8</div>
<div class="t" style="left:77.20px;top:177px;font-size:12.4px;color:#111;transform:scaleX(0.9250);transform-origin:0 0;">20130819</div>
<div class="t" style="left:160.30px;top:177px;font-size:12.4px;color:#111;transform:scaleX(0.9250);transform-origin:0 0;">2</div>
<div class="t" style="left:307.40px;top:177px;font-size:12.4px;color:#111;transform:scaleX(0.9500);transform-origin:0 0;">Monday</div>
<div class="t" style="left:479.60px;top:177px;font-size:12.4px;color:#111;transform:scaleX(0.9500);transform-origin:0 0;">Lunes</div>
<div class="t" style="left:655.60px;top:177px;font-size:12.4px;color:#111;transform:scaleX(0.9500);transform-origin:0 0;">Lundi</div>
<div class="t" style="left:825.60px;top:177px;font-size:12.4px;color:#111;transform:scaleX(0.9250);transform-origin:0 0;">19</div>
<div class="t" style="left:978.40px;top:177px;font-size:12.4px;color:#111;transform:scaleX(0.9250);transform-origin:0 0;">231</div>
<div class="t" style="left:8.30px;top:201px;font-size:12.4px;color:#111;transform:scaleX(0.9250);transform-origin:0 0;">9</div>
<div class="t" style="left:77.20px;top:201px;font-size:12.4px;color:#111;transform:scaleX(0.9250);transform-origin:0 0;">20130826</div>
<div class="t" style="left:160.30px;top:201px;font-size:12.4px;color:#111;transform:scaleX(0.9250);transform-origin:0 0;">2</div>
<div class="t" style="left:307.40px;top:201px;font-size:12.4px;color:#111;transform:scaleX(0.9500);transform-origin:0 0;">Monday</div>
<div class="t" style="left:479.60px;top:201px;font-size:12.4px;color:#111;transform:scaleX(0.9500);transform-origin:0 0;">Lunes</div>
<div class="t" style="left:655.60px;top:201px;font-size:12.4px;color:#111;transform:scaleX(0.9500);transform-origin:0 0;">Lundi</div>
<div class="t" style="left:825.60px;top:201px;font-size:12.4px;color:#111;transform:scaleX(0.9250);transform-origin:0 0;">26</div>
<div class="t" style="left:978.40px;top:201px;font-size:12.4px;color:#111;transform:scaleX(0.9250);transform-origin:0 0;">238</div>
<div class="t" style="left:8.30px;top:225px;font-size:12.4px;color:#111;transform:scaleX(0.9250);transform-origin:0 0;">10</div>
<div class="t" style="left:77.20px;top:225px;font-size:12.4px;color:#111;transform:scaleX(0.9250);transform-origin:0 0;">20130902</div>
<div class="t" style="left:160.30px;top:225px;font-size:12.4px;color:#111;transform:scaleX(0.9250);transform-origin:0 0;">2</div>
<div class="t" style="left:307.40px;top:225px;font-size:12.4px;color:#111;transform:scaleX(0.9500);transform-origin:0 0;">Monday</div>
<div class="t" style="left:479.60px;top:225px;font-size:12.4px;color:#111;transform:scaleX(0.9500);transform-origin:0 0;">Lunes</div>
<div class="t" style="left:655.60px;top:225px;font-size:12.4px;color:#111;transform:scaleX(0.9500);transform-origin:0 0;">Lundi</div>
<div class="t" style="left:825.60px;top:225px;font-size:12.4px;color:#111;transform:scaleX(0.9250);transform-origin:0 0;">2</div>
<div class="t" style="left:978.40px;top:225px;font-size:12.4px;color:#111;transform:scaleX(0.9250);transform-origin:0 0;">245</div>
<div class="t" style="left:8.30px;top:250px;font-size:12.4px;color:#111;transform:scaleX(0.9250);transform-origin:0 0;">11</div>
<div class="t" style="left:77.20px;top:250px;font-size:12.4px;color:#111;transform:scaleX(0.9250);transform-origin:0 0;">20130909</div>
<div class="t" style="left:160.30px;top:250px;font-size:12.4px;color:#111;transform:scaleX(0.9250);transform-origin:0 0;">2</div>
<div class="t" style="left:307.40px;top:250px;font-size:12.4px;color:#111;transform:scaleX(0.9500);transform-origin:0 0;">Monday</div>
<div class="t" style="left:479.60px;top:250px;font-size:12.4px;color:#111;transform:scaleX(0.9500);transform-origin:0 0;">Lunes</div>
<div class="t" style="left:655.60px;top:250px;font-size:12.4px;color:#111;transform:scaleX(0.9500);transform-origin:0 0;">Lundi</div>
<div class="t" style="left:825.60px;top:250px;font-size:12.4px;color:#111;transform:scaleX(0.9250);transform-origin:0 0;">9</div>
<div class="t" style="left:978.40px;top:250px;font-size:12.4px;color:#111;transform:scaleX(0.9250);transform-origin:0 0;">252</div>
<div class="t" style="left:8.30px;top:274px;font-size:12.4px;color:#111;transform:scaleX(0.9250);transform-origin:0 0;">12</div>
<div class="t" style="left:77.20px;top:274px;font-size:12.4px;color:#111;transform:scaleX(0.9250);transform-origin:0 0;">20130916</div>
<div class="t" style="left:160.30px;top:274px;font-size:12.4px;color:#111;transform:scaleX(0.9250);transform-origin:0 0;">2</div>
<div class="t" style="left:307.40px;top:274px;font-size:12.4px;color:#111;transform:scaleX(0.9500);transform-origin:0 0;">Monday</div>
<div class="t" style="left:479.60px;top:274px;font-size:12.4px;color:#111;transform:scaleX(0.9500);transform-origin:0 0;">Lunes</div>
<div class="t" style="left:655.60px;top:274px;font-size:12.4px;color:#111;transform:scaleX(0.9500);transform-origin:0 0;">Lundi</div>
<div class="t" style="left:825.60px;top:274px;font-size:12.4px;color:#111;transform:scaleX(0.9250);transform-origin:0 0;">16</div>
<div class="t" style="left:978.40px;top:274px;font-size:12.4px;color:#111;transform:scaleX(0.9250);transform-origin:0 0;">259</div>
<div class="t" style="left:8.30px;top:298px;font-size:12.4px;color:#111;transform:scaleX(0.9250);transform-origin:0 0;">13</div>
<div class="t" style="left:77.20px;top:298px;font-size:12.4px;color:#111;transform:scaleX(0.9250);transform-origin:0 0;">20130923</div>
<div class="t" style="left:160.30px;top:298px;font-size:12.4px;color:#111;transform:scaleX(0.9250);transform-origin:0 0;">2</div>
<div class="t" style="left:307.40px;top:298px;font-size:12.4px;color:#111;transform:scaleX(0.9500);transform-origin:0 0;">Monday</div>
<div class="t" style="left:479.60px;top:298px;font-size:12.4px;color:#111;transform:scaleX(0.9500);transform-origin:0 0;">Lunes</div>
<div class="t" style="left:655.60px;top:298px;font-size:12.4px;color:#111;transform:scaleX(0.9500);transform-origin:0 0;">Lundi</div>
<div class="t" style="left:825.60px;top:298px;font-size:12.4px;color:#111;transform:scaleX(0.9250);transform-origin:0 0;">23</div>
<div class="t" style="left:978.40px;top:298px;font-size:12.4px;color:#111;transform:scaleX(0.9250);transform-origin:0 0;">266</div>
<div class="t" style="left:8.30px;top:322px;font-size:12.4px;color:#111;transform:scaleX(0.9250);transform-origin:0 0;">14</div>
<div class="t" style="left:77.20px;top:322px;font-size:12.4px;color:#111;transform:scaleX(0.9250);transform-origin:0 0;">20130930</div>
<div class="t" style="left:160.30px;top:322px;font-size:12.4px;color:#111;transform:scaleX(0.9250);transform-origin:0 0;">2</div>
<div class="t" style="left:307.40px;top:322px;font-size:12.4px;color:#111;transform:scaleX(0.9500);transform-origin:0 0;">Monday</div>
<div class="t" style="left:479.60px;top:322px;font-size:12.4px;color:#111;transform:scaleX(0.9500);transform-origin:0 0;">Lunes</div>
<div class="t" style="left:655.60px;top:322px;font-size:12.4px;color:#111;transform:scaleX(0.9500);transform-origin:0 0;">Lundi</div>
<div class="t" style="left:825.60px;top:322px;font-size:12.4px;color:#111;transform:scaleX(0.9250);transform-origin:0 0;">30</div>
<div class="t" style="left:978.40px;top:322px;font-size:12.4px;color:#111;transform:scaleX(0.9250);transform-origin:0 0;">273</div>
</div>
<div class="a" style="left:1445px;top:219px;width:5px;height:354px;background:#ececec"></div>
<div class="a" style="left:1445px;top:219.5px;width:5px;height:14.5px;background:#6b6b6b;border-radius:3px"></div>
<div class="a" style="left:327px;top:573px;width:1123px;height:6px;background:#ececec"></div>
<div class="a" style="left:327px;top:573px;width:493px;height:9px;background:#6b6b6b;border-radius:4px"></div>
</body></html>
